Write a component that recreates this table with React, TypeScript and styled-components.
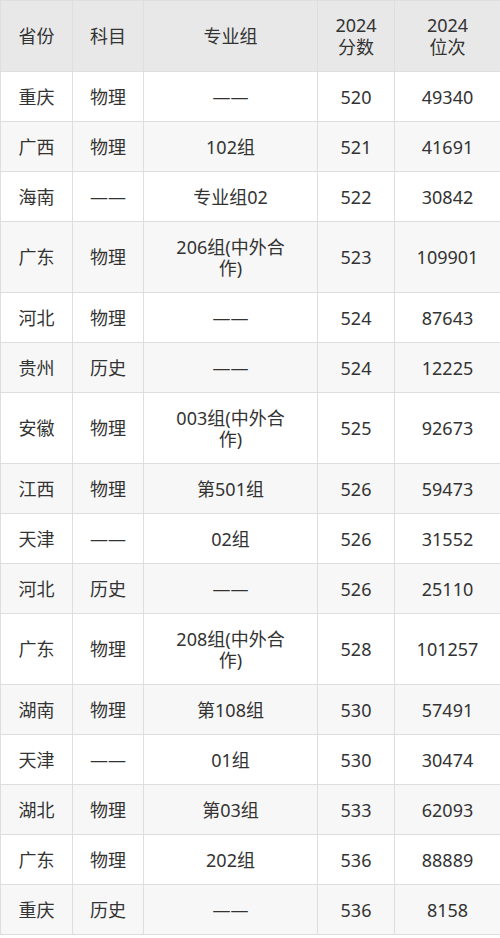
import React from "react";
import styled, { createGlobalStyle } from "styled-components";

const GlobalStyle = createGlobalStyle`
  html, body {
    margin: 0;
    padding: 0;
    background: #ffffff;
  }
  body {
    font-family: "Noto Sans", "Noto Sans CJK SC", sans-serif;
    color: #333333;
  }
`;

type Row = {
  province: string;
  subject: string;
  group: string[];
  score: string;
  rank: string;
};

const rows: Row[] = [
  { province: "重庆", subject: "物理", group: ["——"], score: "520", rank: "49340" },
  { province: "广西", subject: "物理", group: ["102组"], score: "521", rank: "41691" },
  { province: "海南", subject: "——", group: ["专业组02"], score: "522", rank: "30842" },
  { province: "广东", subject: "物理", group: ["206组(中外合", "作)"], score: "523", rank: "109901" },
  { province: "河北", subject: "物理", group: ["——"], score: "524", rank: "87643" },
  { province: "贵州", subject: "历史", group: ["——"], score: "524", rank: "12225" },
  { province: "安徽", subject: "物理", group: ["003组(中外合", "作)"], score: "525", rank: "92673" },
  { province: "江西", subject: "物理", group: ["第501组"], score: "526", rank: "59473" },
  { province: "天津", subject: "——", group: ["02组"], score: "526", rank: "31552" },
  { province: "河北", subject: "历史", group: ["——"], score: "526", rank: "25110" },
  { province: "广东", subject: "物理", group: ["208组(中外合", "作)"], score: "528", rank: "101257" },
  { province: "湖南", subject: "物理", group: ["第108组"], score: "530", rank: "57491" },
  { province: "天津", subject: "——", group: ["01组"], score: "530", rank: "30474" },
  { province: "湖北", subject: "物理", group: ["第03组"], score: "533", rank: "62093" },
  { province: "广东", subject: "物理", group: ["202组"], score: "536", rank: "88889" },
  { province: "重庆", subject: "历史", group: ["——"], score: "536", rank: "8158" },
];

const Table = styled.table`
  width: 500px;
  border-collapse: collapse;
  table-layout: fixed;
  font-size: 18px;
  line-height: 21px;
`;

const Cell = styled.td`
  border: 1px solid #dedede;
  padding: 14.5px 4px 13.5px;
  text-align: center;
  vertical-align: middle;
  white-space: nowrap;
`;

const HeadCell = styled(Cell).attrs({ as: "th" })`
  font-weight: 400;
  line-height: 22px;
  padding: 13px 4px 13px;
  background: #e8e8e8;
`;

const BodyRow = styled.tr<{ $striped: boolean }>`
  background: ${(p) => (p.$striped ? "#f7f7f7" : "#ffffff")};
`;

const Line = styled.span`
  display: block;
`;

export default function App() {
  return (
    <>
      <GlobalStyle />
      <Table>
        <colgroup>
          <col style={{ width: 72 }} />
          <col style={{ width: 71 }} />
          <col style={{ width: 174 }} />
          <col style={{ width: 77 }} />
          <col style={{ width: 106 }} />
        </colgroup>
        <thead>
          <tr>
            <HeadCell>省份</HeadCell>
            <HeadCell>科目</HeadCell>
            <HeadCell>专业组</HeadCell>
            <HeadCell>
              <Line>2024</Line>
              <Line>分数</Line>
            </HeadCell>
            <HeadCell>
              <Line>2024</Line>
              <Line>位次</Line>
            </HeadCell>
          </tr>
        </thead>
        <tbody>
          {rows.map((r, i) => (
            <BodyRow key={i} $striped={i % 2 === 1}>
              <Cell>{r.province}</Cell>
              <Cell>{r.subject}</Cell>
              <Cell>
                {r.group.map((g, j) => (
                  <Line key={j}>{g}</Line>
                ))}
              </Cell>
              <Cell>{r.score}</Cell>
              <Cell>{r.rank}</Cell>
            </BodyRow>
          ))}
        </tbody>
      </Table>
    </>
  );
}
